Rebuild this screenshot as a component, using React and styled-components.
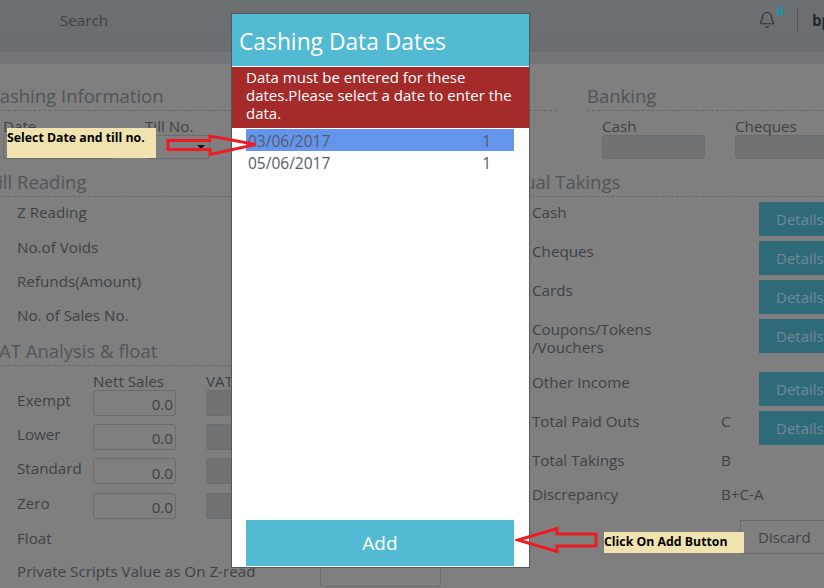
import React from 'react';
import styled, { createGlobalStyle } from 'styled-components';
import { Bell } from 'lucide-react';

const GlobalStyle = createGlobalStyle`
    html, body {
        margin: 0;
        padding: 0;
        overflow: hidden;
        background: #7f7f7f;
    }
    * {
        box-sizing: border-box;
    }
`;

const FONT = '"Open Sans", "Noto Sans", sans-serif';
const TEXT = '#3e4246';

const Page = styled.div`
    position: relative;
    width: 824px;
    height: 588px;
    overflow: hidden;
    background: #7f7f7f;
    color: ${TEXT};
    font-family: ${FONT};
    font-size: 15.2px;
`;

//Top bar
const TopBar = styled.header`
    display: flex;
    align-items: center;
    height: 52px;
    padding: 0 0 13px 60px;
    background: linear-gradient(#6d7072, #6a6e70);
`;

const Search = styled.span`
    flex: 1;
`;

const BellWrap = styled.div`
    position: relative;
    display: flex;
    color: #2f3336;
`;

const BellCount = styled.span`
    position: absolute;
    top: -7px;
    left: 18px;
    color: #1f8fa8;
    font-family: "DejaVu Sans", sans-serif;
    font-size: 12px;
    font-weight: 700;
    line-height: 16px;
`;

const Divider = styled.div`
    width: 1px;
    height: 24px;
    margin: 0 14px 0 21px;
    background: #54585b;
`;

const User = styled.span`
    width: 12px;
    overflow: hidden;
    color: #26292c;
    font-weight: 700;
`;

const SubBand = styled.div`
    height: 12px;
    background: #737577;
`;

//Form behind the dialog
const Content = styled.main`
    margin-left: -12px;
    width: 860px;
`;

const TopRow = styled.div`
    display: grid;
    grid-template-columns: 569px 1fr;
    column-gap: 30px;
    height: 107px;
    padding-top: 21px;
`;

const BottomRow = styled.div`
    display: grid;
    grid-template-columns: 497px 1fr;
    column-gap: 12px;
`;

const SectionTitle = styled.h2`
    height: 26px;
    margin: 0;
    border-bottom: 1px dashed #666a6d;
    color: #50555b;
    font-size: 18.5px;
    font-weight: 400;
    line-height: 22px;
    white-space: nowrap;
`;

const Fields = styled.div`
    display: flex;
    gap: ${props => props.gap}px;
    padding: 7px 0 0 ${props => props.indent}px;
`;

const FieldLabel = styled.label`
    display: block;
    height: 17px;
    line-height: 17px;
`;

const Input = styled.div`
    display: flex;
    align-items: center;
    justify-content: flex-end;
    width: ${props => props.width}px;
    height: ${props => props.height || 24}px;
    padding: 3px 2px 0 0;
    border: 1px solid #6a6c6e;
    border-radius: 3px;
    background: ${props => props.disabled ? '#717274' : 'transparent'};
`;

const Caret = styled.span`
    width: 0;
    height: 0;
    margin: 0 2px 4px 0;
    border-style: solid;
    border-width: 4px 4px 0;
    border-color: #111 transparent transparent;
`;

const Rows = styled.div`
    margin-top: -2px;
    padding-left: 29px;
`;

const ReadingRow = styled.div`
    display: flex;
    align-items: center;
    height: 34.4px;
`;

const VatSection = styled.section`
    margin-top: 7px;
`;

const VatHead = styled.div`
    display: flex;
    height: 24px;
    padding: 7px 0 0 105px;
    line-height: 17px;
`;

const VatHeadCell = styled.span`
    width: 113px;
`;

const VatRow = styled.div`
    display: grid;
    grid-template-columns: 76px 113px 83px;
    align-items: start;
    height: 34.4px;
    padding-left: 29px;
    line-height: 20px;
`;

const FloatRow = styled.div`
    height: 34.4px;
    padding-left: 29px;
    line-height: 22px;
`;

const ScriptsRow = styled.div`
    display: flex;
    justify-content: space-between;
    width: 453px;
    padding-left: 29px;
    line-height: 19px;
`;

const ScriptsInput = styled(Input)`
    margin-top: -3px;
`;

const TakingsBody = styled.div`
    padding: 5px 0 0 35px;
`;

const TakingRow = styled.div`
    display: grid;
    grid-template-columns: 189px 38px 1fr;
    align-items: start;
    height: ${props => props.height || 34}px;
    margin-bottom: ${props => props.gap === undefined ? 5 : props.gap}px;
    line-height: 18px;
    white-space: nowrap;
`;

const TakingText = styled.span`
    padding-top: 1px;
`;

const DetailsButton = styled.div`
    display: flex;
    align-items: center;
    width: 80px;
    height: 34px;
    padding-left: 17px;
    background: #2f6a79;
    color: #6f8b94;
    font-size: 15px;
`;

const DiscardButton = styled.div`
    width: 90px;
    height: 34px;
    margin: 2px 0 0 208px;
    padding-left: 17px;
    border: 1px solid #696b6d;
    font-size: 15px;
    line-height: 32px;
`;

//Dialog
const Modal = styled.section`
    position: absolute;
    top: 13px;
    left: 231px;
    display: flex;
    flex-direction: column;
    width: 299px;
    height: 555px;
    border: 1px solid #55595c;
    background: #fff;
`;

const ModalHeader = styled.h1`
    height: 52px;
    margin: 0;
    padding: 13px 0 0 7px;
    background: #52bad2;
    color: #fff;
    font-size: 22.8px;
    font-weight: 400;
    line-height: 30px;
`;

const ModalNotice = styled.p`
    height: 61px;
    margin: 1px 0;
    padding: 1px 10px 0 14px;
    background: #a52a2a;
    color: #fff;
    font-size: 15px;
    line-height: 18px;
`;

const DateList = styled.ul`
    flex: 1;
    margin: 0;
    padding: 0 15px 0 14px;
    list-style: none;
`;

const DateRow = styled.li`
    display: flex;
    justify-content: space-between;
    height: 22px;
    padding: 0 23px 0 2px;
    background: ${props => props.selected ? '#6495ed' : 'transparent'};
    color: #555c66;
    font-size: 15.5px;
    line-height: 25px;
`;

const AddButton = styled.button`
    height: 46px;
    margin: 0 15px 1px 14px;
    border: 0;
    background: #52bad2;
    color: #fff;
    font-family: ${FONT};
    font-size: 19px;
`;

//Tutorial annotations
const Note = styled.div`
    position: absolute;
    top: ${props => props.top}px;
    left: ${props => props.left}px;
    width: ${props => props.width}px;
    height: ${props => props.height}px;
    background: #f0e3b0;
    color: #000;
    font-size: 12.3px;
    font-weight: 700;
    line-height: ${props => props.lineHeight}px;
    white-space: nowrap;
`;

const Arrow = styled.svg`
    position: absolute;
    top: ${props => props.top}px;
    left: ${props => props.left}px;
`;

const reading = ['Z Reading', 'No.of Voids', 'Refunds(Amount)', 'No. of Sales No.'];
const vat = ['Exempt', 'Lower', 'Standard', 'Zero'];

export default function App() {
    return (
        <Page>
            <GlobalStyle />
            <TopBar>
                <Search>Search</Search>
                <BellWrap>
                    <Bell size={18} strokeWidth={1.6} />
                    <BellCount>8</BellCount>
                </BellWrap>
                <Divider />
                <User>bp</User>
            </TopBar>
            <SubBand />
            <Content>
                <TopRow>
                    <section>
                        <SectionTitle>Cashing Information</SectionTitle>
                        <Fields indent={15} gap={31}>
                            <div>
                                <FieldLabel>Date</FieldLabel>
                                <Input width={111} />
                            </div>
                            <div>
                                <FieldLabel>Till No.</FieldLabel>
                                <Input width={65}><Caret /></Input>
                            </div>
                        </Fields>
                    </section>
                    <section>
                        <SectionTitle>Banking</SectionTitle>
                        <Fields indent={15} gap={30}>
                            <div>
                                <FieldLabel>Cash</FieldLabel>
                                <Input width={103} disabled />
                            </div>
                            <div>
                                <FieldLabel>Cheques</FieldLabel>
                                <Input width={103} disabled />
                            </div>
                        </Fields>
                    </section>
                </TopRow>
                <BottomRow>
                    <div>
                        <SectionTitle>Till Reading</SectionTitle>
                        <Rows>
                            {reading.map(label => <ReadingRow key={label}>{label}</ReadingRow>)}
                        </Rows>
                        <VatSection>
                            <SectionTitle>VAT Analysis &amp; float</SectionTitle>
                            <VatHead>
                                <VatHeadCell>Nett Sales</VatHeadCell>
                                <VatHeadCell>VAT</VatHeadCell>
                            </VatHead>
                            {vat.map(label => (
                                <VatRow key={label}>
                                    <span>{label}</span>
                                    <Input width={83} height={26}>0.0</Input>
                                    <Input width={83} height={26} disabled />
                                </VatRow>
                            ))}
                            <FloatRow>Float</FloatRow>
                            <ScriptsRow>
                                <span>Private Scripts Value as On Z-read</span>
                                <ScriptsInput width={121} height={28} />
                            </ScriptsRow>
                        </VatSection>
                    </div>
                    <div>
                        <SectionTitle>Actual Takings</SectionTitle>
                        <TakingsBody>
                            <TakingRow><TakingText>Cash</TakingText><span /><DetailsButton>Details</DetailsButton></TakingRow>
                            <TakingRow><TakingText>Cheques</TakingText><span /><DetailsButton>Details</DetailsButton></TakingRow>
                            <TakingRow><TakingText>Cards</TakingText><span /><DetailsButton>Details</DetailsButton></TakingRow>
                            <TakingRow height={48}>
                                <TakingText>Coupons/Tokens<br />/Vouchers</TakingText><span /><DetailsButton>Details</DetailsButton>
                            </TakingRow>
                            <TakingRow><TakingText>Other Income</TakingText><span /><DetailsButton>Details</DetailsButton></TakingRow>
                            <TakingRow><TakingText>Total Paid Outs</TakingText><TakingText>C</TakingText><DetailsButton>Details</DetailsButton></TakingRow>
                            <TakingRow gap={0}><TakingText>Total Takings</TakingText><TakingText>B</TakingText></TakingRow>
                            <TakingRow gap={0}><TakingText>Discrepancy</TakingText><TakingText>B+C-A</TakingText></TakingRow>
                            <DiscardButton>Discard</DiscardButton>
                        </TakingsBody>
                    </div>
                </BottomRow>
            </Content>

            <Modal>
                <ModalHeader>Cashing Data Dates</ModalHeader>
                <ModalNotice>Data must be entered for these dates.Please select a date to enter the data.</ModalNotice>
                <DateList>
                    <DateRow selected><span>03/06/2017</span><span>1</span></DateRow>
                    <DateRow><span>05/06/2017</span><span>1</span></DateRow>
                </DateList>
                <AddButton>Add</AddButton>
            </Modal>

            <Note top={128} left={7} width={149} height={30} lineHeight={19}>Select Date and till no.</Note>
            <Arrow top={133} left={165} width={95} height={24} viewBox="0 0 95 24">
                <path d="M3 7.5H45V3L91 11.5L45 21.5V16.5H3Z" fill="none" stroke="#ed1c24" strokeWidth="3" />
            </Arrow>
            <Note top={532} left={604} width={140} height={21} lineHeight={20}>Click On Add Button</Note>
            <Arrow top={526} left={515} width={84} height={28} viewBox="0 0 84 28">
                <path d="M3 14L42 2.5V8H81V20H42V25.5Z" fill="none" stroke="#ed1c24" strokeWidth="3" />
            </Arrow>
        </Page>
    );
}
